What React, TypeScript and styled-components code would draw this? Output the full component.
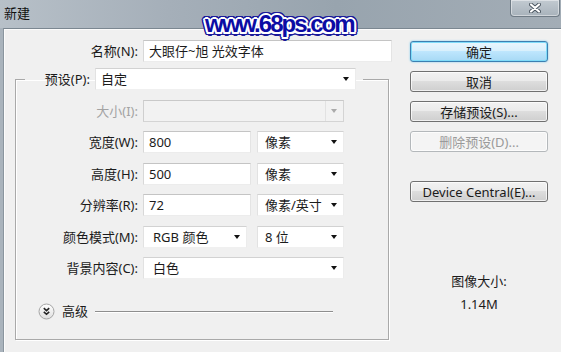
import React from "react";
import styled, { createGlobalStyle } from "styled-components";

const GlobalStyle = createGlobalStyle`
  html, body {
    margin: 0;
    padding: 0;
    background: #f0f0f0;
  }
  body {
    font-family: "Noto Sans", "Noto Sans CJK SC", sans-serif;
    font-size: 13px;
    color: #1b1b1b;
  }
`;

const Window = styled.div`
  position: relative;
  width: 561px;
  height: 352px;
  overflow: hidden;
  display: flex;
  flex-direction: column;
  background: #a9b3bc;
`;

const TitleBar = styled.div`
  height: 28px;
  flex: none;
  display: flex;
  align-items: flex-start;
  background: linear-gradient(90deg, #b7c0c8 0%, #a5afb9 30%, #98a4ae 60%, #a3adb6 100%);
`;

const Title = styled.div`
  padding: 4px 0 0 4px;
  line-height: 18px;
  font-size: 13px;
  color: #111;
`;

const CloseButton = styled.div`
  margin-left: auto;
  margin-right: 1px;
  width: 50px;
  height: 17px;
  box-sizing: border-box;
  border: 1px solid #6f7b85;
  border-top: none;
  border-radius: 0 0 4px 4px;
  background: linear-gradient(#c2cad1, #a8b2bb);
  box-shadow: inset 0 0 0 1px rgba(255, 255, 255, 0.45);
  display: flex;
  align-items: center;
  justify-content: center;
`;

const Watermark = styled.div`
  position: absolute;
  left: 205px;
  top: 12px;
  font-family: "Liberation Sans", Arial, sans-serif;
  font-weight: bold;
  font-size: 24px;
  line-height: 24px;
  letter-spacing: -2px;
  color: #0c0ca4;
  text-shadow:
    2px 0 0 #fff, -2px 0 0 #fff, 0 2px 0 #fff, 0 -2px 0 #fff,
    1.5px 1.5px 0 #fff, -1.5px 1.5px 0 #fff, 1.5px -1.5px 0 #fff, -1.5px -1.5px 0 #fff,
    3.5px 0 0 #1a1a9a, -3.5px 0 0 #1a1a9a, 0 3.5px 0 #1a1a9a, 0 -3.5px 0 #1a1a9a,
    2.5px 2.5px 0 #1a1a9a, -2.5px 2.5px 0 #1a1a9a, 2.5px -2.5px 0 #1a1a9a, -2.5px -2.5px 0 #1a1a9a,
    3px 1.5px 0 #1a1a9a, -3px 1.5px 0 #1a1a9a, 3px -1.5px 0 #1a1a9a, -3px -1.5px 0 #1a1a9a,
    1.5px 3px 0 #1a1a9a, -1.5px 3px 0 #1a1a9a, 1.5px -3px 0 #1a1a9a, -1.5px -3px 0 #1a1a9a;
`;

const Body = styled.div`
  flex: 1;
  margin-left: 3px;
  border-top: 1px solid #7b8791;
  border-left: 1px solid #8a959e;
  background: #f0f0f0;
  box-shadow: inset 1px 1px 0 #fbfbfb;
  display: flex;
  align-items: flex-start;
  padding-top: 11px;
`;

const LeftColumn = styled.div`
  padding-left: 11px;
  display: flex;
  flex-direction: column;
`;

const Row = styled.div`
  display: flex;
  align-items: center;
  height: 22px;
  margin-top: 9.5px;
`;

const NameRow = styled(Row)`
  margin-top: 0;
`;

const Label = styled.div<{ $w: number; $disabled?: boolean }>`
  width: ${(p) => p.$w}px;
  margin-right: 5px;
  text-align: right;
  line-height: 18px;
  white-space: nowrap;
  color: ${(p) => (p.$disabled ? "#a3a3a3" : "#1b1b1b")};
`;

const TextInput = styled.div<{ $w: number }>`
  width: ${(p) => p.$w}px;
  height: 22px;
  box-sizing: border-box;
  padding-left: 5px;
  display: flex;
  align-items: center;
  line-height: 18px;
  white-space: nowrap;
  background: #fff;
  border: 1px solid;
  border-color: #c4c4c4 #e4e4e4 #ececec #d8d8d8;
`;

const Select = styled.div<{ $w: number; $pad?: number; $disabled?: boolean }>`
  width: ${(p) => p.$w}px;
  height: 22px;
  box-sizing: border-box;
  padding: 0 4px 0 ${(p) => p.$pad ?? 7}px;
  display: flex;
  align-items: center;
  justify-content: space-between;
  line-height: 18px;
  white-space: nowrap;
  background: ${(p) => (p.$disabled ? "#f2f2f2" : "#fff")};
  border: 1px solid;
  border-color: ${(p) =>
    p.$disabled ? "#c9c9c9 #d4d4d4 #d4d4d4 #cfcfcf" : "#d2d2d2 #ececec #f0f0f0 #e2e2e2"};
`;

const DropButton = styled.span<{ $disabled?: boolean }>`
  display: flex;
  align-items: center;
  justify-content: center;
  align-self: stretch;
  width: 16px;
  margin-right: -3px;
  border-left: 1px solid ${(p) => (p.$disabled ? "#e2e2e2" : "transparent")};
`;

const Arrow = styled.span<{ $disabled?: boolean }>`
  width: 0;
  height: 0;
  border-left: 3.5px solid transparent;
  border-right: 3.5px solid transparent;
  border-top: 4px solid ${(p) => (p.$disabled ? "#aaaaaa" : "#111")};
`;

const Group = styled.fieldset`
  margin: 6px 0 0 0;
  width: 374px;
  box-sizing: border-box;
  padding: 0 0 19px 9px;
  border: 1px solid #a9a9a9;
  box-shadow: 1px 1px 0 #fff, inset 1px 1px 0 #fff;
`;

const Legend = styled.legend`
  padding: 0 7px 0 0;
  display: flex;
  align-items: center;
`;

const AdvancedRow = styled.div`
  display: flex;
  align-items: center;
  margin-top: 23px;
  padding-left: 13px;
`;

const AdvancedText = styled.span`
  margin-left: 7px;
  line-height: 18px;
`;

const Rule = styled.span`
  margin-left: 7px;
  width: 238px;
  height: 1px;
  background: #8e8e8e;
  box-shadow: 0 1px 0 #fff;
`;

const Spacer = styled.span<{ $w?: number }>`
  flex: none;
  width: ${(p) => p.$w ?? 6}px;
`;

const RightColumn = styled.div`
  margin-left: 18px;
  width: 138px;
  display: flex;
  flex-direction: column;
  align-items: stretch;
  padding-top: 1px;
`;

const Button = styled.div<{ $primary?: boolean; $disabled?: boolean; $gap?: number }>`
  height: 21px;
  margin-top: ${(p) => p.$gap ?? 0}px;
  box-sizing: border-box;
  border: 1px solid ${(p) => (p.$primary ? "#3c7fb1" : p.$disabled ? "#b4b8bb" : "#707070")};
  border-radius: 3px;
  display: flex;
  align-items: center;
  justify-content: center;
  line-height: 18px;
  white-space: nowrap;
  color: ${(p) => (p.$disabled ? "#9a9a9a" : "#1b1b1b")};
  background: ${(p) =>
    p.$primary
      ? "linear-gradient(#eaf6fd 0%, #d9f0fc 45%, #bee6fd 50%, #a7d9f5 100%)"
      : p.$disabled
      ? "#f4f4f4"
      : "linear-gradient(#f2f2f2 0%, #ebebeb 45%, #dddddd 50%, #cfcfcf 100%)"};
  box-shadow: ${(p) =>
    p.$primary ? "inset 0 0 0 1px #7fdcf9, 0 0 2px #6fc9ee" : "inset 0 0 0 1px rgba(255,255,255,0.7)"};
`;

const SizeInfo = styled.div<{ $gap: number }>`
  margin-top: ${(p) => p.$gap}px;
  text-align: center;
  line-height: 18px;
  color: #1b1b1b;
`;

const AdvancedIcon = () => (
  <svg width="17" height="17" viewBox="0 0 17 17">
    <defs>
      <linearGradient id="adv" x1="0" y1="0" x2="0" y2="1">
        <stop offset="0" stopColor="#ffffff" />
        <stop offset="1" stopColor="#dedede" />
      </linearGradient>
    </defs>
    <circle cx="8.5" cy="8.5" r="7.5" fill="url(#adv)" stroke="#a5a5a5" />
    <path d="M5.8 5.2 L8.5 7.6 L11.2 5.2 M5.8 8.9 L8.5 11.3 L11.2 8.9" fill="none" stroke="#222" strokeWidth="1.6" />
  </svg>
);

const CloseGlyph = () => (
  <svg width="12" height="10" viewBox="0 0 12 10">
    <path d="M2 1.5 L10 8.5 M10 1.5 L2 8.5" stroke="#4a5560" strokeWidth="4" strokeLinecap="round" />
    <path d="M2 1.5 L10 8.5 M10 1.5 L2 8.5" stroke="#ffffff" strokeWidth="2.2" strokeLinecap="round" />
  </svg>
);

const SelectBox = ({
  w,
  pad,
  disabled,
  children,
}: {
  w: number;
  pad?: number;
  disabled?: boolean;
  children?: React.ReactNode;
}) => (
  <Select $w={w} $pad={pad} $disabled={disabled}>
    <span>{children}</span>
    <DropButton $disabled={disabled}>
      <Arrow $disabled={disabled} />
    </DropButton>
  </Select>
);

export default function App() {
  return (
    <Window>
      <GlobalStyle />
      <TitleBar>
        <Title>新建</Title>
        <CloseButton>
          <CloseGlyph />
        </CloseButton>
      </TitleBar>
      <Watermark>www.68ps.com</Watermark>

      <Body>
        <LeftColumn>
          <NameRow>
            <Label $w={123}>名称(N):</Label>
            <TextInput $w={249}>大眼仔~旭 光效字体</TextInput>
          </NameRow>

          <Group>
            <Legend>
              <Label $w={65}>预设(P):</Label>
              <SelectBox w={261} pad={5}>自定</SelectBox>
            </Legend>

            <Row>
              <Label $w={113} $disabled>大小(I):</Label>
              <SelectBox w={201} disabled />
            </Row>
            <Row>
              <Label $w={113}>宽度(W):</Label>
              <TextInput $w={108}>800</TextInput>
              <Spacer />
              <SelectBox w={87}>像素</SelectBox>
            </Row>
            <Row>
              <Label $w={113}>高度(H):</Label>
              <TextInput $w={108}>500</TextInput>
              <Spacer />
              <SelectBox w={87}>像素</SelectBox>
            </Row>
            <Row>
              <Label $w={113}>分辨率(R):</Label>
              <TextInput $w={108}>72</TextInput>
              <Spacer />
              <SelectBox w={87}>像素/英寸</SelectBox>
            </Row>
            <Row>
              <Label $w={113}>颜色模式(M):</Label>
              <SelectBox w={104} pad={9}>RGB 颜色</SelectBox>
              <Spacer $w={10} />
              <SelectBox w={87}>8 位</SelectBox>
            </Row>
            <Row>
              <Label $w={113}>背景内容(C):</Label>
              <SelectBox w={201} pad={9}>白色</SelectBox>
            </Row>

            <AdvancedRow>
              <AdvancedIcon />
              <AdvancedText>高级</AdvancedText>
              <Rule />
            </AdvancedRow>
          </Group>
        </LeftColumn>

        <RightColumn>
          <Button $primary>确定</Button>
          <Button $gap={9}>取消</Button>
          <Button $gap={9}>存储预设(S)...</Button>
          <Button $gap={9} $disabled>删除预设(D)...</Button>
          <Button $gap={29}>Device Central(E)...</Button>
          <SizeInfo $gap={70}>图像大小:</SizeInfo>
          <SizeInfo $gap={5}>1.14M</SizeInfo>
        </RightColumn>
      </Body>
    </Window>
  );
}
